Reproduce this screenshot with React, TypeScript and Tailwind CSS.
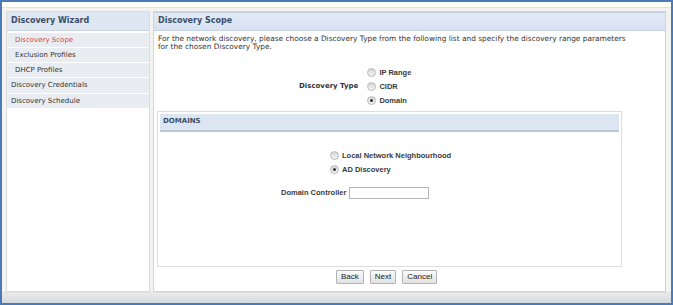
import React from "react";

const verdana = "font-['DejaVu_Sans',Verdana,sans-serif]";
const arial = "font-['Liberation_Sans',Arial,sans-serif]";

function Radio({ checked }: { checked?: boolean }) {
  return (
    <span className="inline-flex h-[9px] w-[9px] items-center justify-center rounded-full border border-[#b9b9b9] bg-gradient-to-b from-[#d6d6d6] to-[#f4f4f4]">
      {checked && <span className="h-[3px] w-[3px] rounded-full bg-[#333]" />}
    </span>
  );
}

function RadioRow({ label, checked }: { label: string; checked?: boolean }) {
  return (
    <div className="flex items-center gap-[3px] h-[14px]">
      <Radio checked={checked} />
      <span className={`${arial} text-[7.5px] font-bold text-[#3a3a3a]`}>{label}</span>
    </div>
  );
}

const menu = [
  { label: "Discovery Scope", active: true, indent: true },
  { label: "Exclusion Profiles", indent: true },
  { label: "DHCP Profiles", indent: true },
  { label: "Discovery Credentials" },
  { label: "Discovery Schedule" },
];

export default function App() {
  return (
    <div className="w-[673px] h-[305px] border-2 border-[#4a7bb7] bg-[#f3f4f2] flex flex-col overflow-hidden">
      <div className="h-[6px] bg-[#fdfcf5] border-b border-[#e6e3d6]" />
      <div className="flex flex-1 px-[4px] pt-[3px] gap-[3px]">
        {/* Left wizard menu */}
        <div className="w-[144px] h-[281px] bg-white border border-[#dcdcdc] flex flex-col">
          <div className="h-[19px] bg-[#dde6f1] border-b border-[#c9d3df] flex items-center px-[4px] mb-[2px]">
            <span className={`${verdana} text-[8px] font-bold text-[#3b4f6a]`}>Discovery Wizard</span>
          </div>
          {menu.map((m) => (
            <div
              key={m.label}
              className={`h-[15.25px] bg-[#e9edf1] border-b border-white flex items-center ${m.indent ? "pl-[8px]" : "pl-[4px]"}`}
            >
              <span className={`${verdana} text-[7px] ${m.active ? "text-[#e0424a]" : "text-[#333]"}`}>{m.label}</span>
            </div>
          ))}
        </div>

        {/* Right content */}
        <div className="flex-1 h-[281px] bg-white border border-[#d4d4d4] flex flex-col mr-[1px]">
          <div className="h-[19px] bg-gradient-to-b from-[#e2eaf6] to-[#d8e2f1] border-y border-[#c7d2e2] flex items-center px-[4px]">
            <span className={`${verdana} text-[8px] font-bold text-[#3b4f6a]`}>Discovery Scope</span>
          </div>
          <p className={`${verdana} text-[7.4px] leading-[8px] text-[#333] px-[4px] mt-[4px] w-[478px]`}>
            For the network discovery, please choose a Discovery Type from the following list and specify the discovery range parameters for the chosen Discovery Type.
          </p>

          <div className="flex items-center mt-[15px] ml-[145px]">
            <span className={`${verdana} text-[7px] font-bold text-[#333] mr-[9px]`}>Discovery Type</span>
            <div className="flex flex-col">
              <RadioRow label="IP Range" />
              <RadioRow label="CIDR" />
              <RadioRow label="Domain" checked />
            </div>
          </div>

          <div className="mt-[3px] ml-[3px] w-[465px] h-[156px] border border-[#dedede] p-[2px] flex flex-col">
            <div className="h-[18px] bg-[#dce6f3] border-b-2 border-[#b9c6d6] flex items-center px-[3px]">
              <span className={`${verdana} text-[7px] font-bold text-[#3b4f6a]`}>DOMAINS</span>
            </div>
            <div className="flex flex-col ml-[170px] mt-[17px]">
              <RadioRow label="Local Network Neighbourhood" />
              <RadioRow label="AD Discovery" checked />
            </div>
            <div className="flex items-center mt-[10px] ml-[121px] gap-[3px]">
              <span className={`${arial} text-[7.5px] font-bold text-[#3a3a3a]`}>Domain Controller</span>
              <input className="w-[80px] h-[12px] border border-[#b5b5b5] bg-white" />
            </div>
          </div>

          <div className="flex gap-[6px] mt-[3px] ml-[182px]">
            {["Back", "Next", "Cancel"].map((b) => (
              <button
                key={b}
                className={`${arial} text-[8px] text-[#222] h-[14px] px-[4px] border border-[#b3b3b3] bg-gradient-to-b from-[#fafafa] to-[#e2e2e2] rounded-[1px]`}
              >
                {b}
              </button>
            ))}
          </div>
        </div>
      </div>
      <div className="h-[12px] bg-gradient-to-b from-[#e9ebec] to-[#d5d9dd] border-t border-[#e0e0e0]" />
    </div>
  );
}
